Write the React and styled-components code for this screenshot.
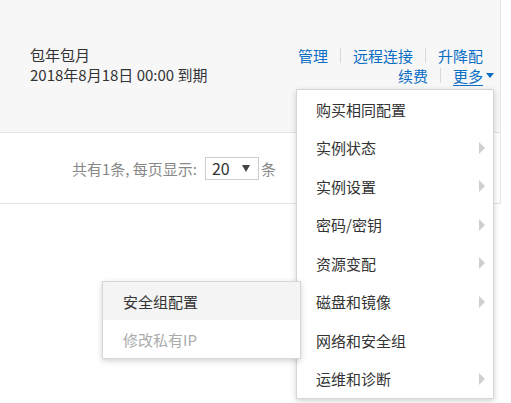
import React from 'react';
import styled, { createGlobalStyle } from 'styled-components';

const GlobalStyle = createGlobalStyle`
  body {
    margin: 0;
    background: #fff;
    font-family: "Noto Sans CJK SC", "Noto Sans", "Liberation Sans", sans-serif;
  }
`;

const menuItems = [
  { label: '购买相同配置' },
  { label: '实例状态', sub: true },
  { label: '实例设置', sub: true },
  { label: '密码/密钥', sub: true },
  { label: '资源变配', sub: true },
  { label: '磁盘和镜像', sub: true },
  { label: '网络和安全组' },
  { label: '运维和诊断', sub: true },
];

const subItems = [
  { label: '安全组配置', active: true },
  { label: '修改私有IP', disabled: true },
];

export default function App() {
  return (
    <>
      <GlobalStyle />
      <Page>
        <Panel>
          <InstanceRow>
            <Billing>
              <div>包年包月</div>
              <div>2018年8月18日 00:00 到期</div>
            </Billing>
            <Actions>
              <ActionLine $inset>
                <Link>管理</Link>
                <Sep />
                <Link>远程连接</Link>
                <Sep />
                <Link>升降配</Link>
              </ActionLine>
              <ActionLine>
                <Link>续费</Link>
                <Sep />
                <Link $underline>更多</Link>
                <Caret />
              </ActionLine>
            </Actions>
          </InstanceRow>
          <PagerRow>
            共有1条, 每页显示:
            <PageSize>
              20
              <SelectCaret />
            </PageSize>
            条
          </PagerRow>
        </Panel>

        <Menu>
          {menuItems.map(item => (
            <MenuItem key={item.label}>
              {item.label}
              {item.sub && <SubArrow />}
            </MenuItem>
          ))}
        </Menu>

        <SubMenu>
          {subItems.map(item => (
            <SubItem
              key={item.label}
              $active={item.active}
              $disabled={item.disabled}
            >
              {item.label}
            </SubItem>
          ))}
        </SubMenu>
      </Page>
    </>
  );
}

const Page = styled.div`
  position: relative;
  width: 511px;
  height: 403px;
  overflow: hidden;
  background: #fff;
`;

const Panel = styled.div`
  width: 500px;
  border-right: 1px solid #e6e6e6;
`;

const InstanceRow = styled.div`
  display: flex;
  justify-content: space-between;
  align-items: flex-start;
  height: 133px;
  box-sizing: border-box;
  padding: 45px 6px 0 30px;
  background: #f7f7f8;
  border-bottom: 1px solid #e2e2e2;
`;

const Billing = styled.div`
  font-size: 15px;
  line-height: 20px;
  color: #333;
`;

const Actions = styled.div`
  display: flex;
  flex-direction: column;
  align-items: flex-end;
`;

const ActionLine = styled.div`
  display: flex;
  align-items: center;
  height: 20px;
  padding-right: ${p => (p.$inset ? '11px' : '0')};
  font-size: 15px;
`;

const Link = styled.span`
  color: #0a6ec4;
  cursor: pointer;
  text-decoration: ${p => (p.$underline ? 'underline' : 'none')};
  text-underline-offset: 3px;
`;

const Sep = styled.span`
  width: 1px;
  height: 15px;
  margin: 0 12px;
  background: #d9d9d9;
`;

const Caret = styled.span`
  margin-left: 3px;
  border-left: 4px solid transparent;
  border-right: 4px solid transparent;
  border-top: 5px solid #0a6ec4;
`;

const PagerRow = styled.div`
  display: flex;
  justify-content: flex-end;
  align-items: center;
  height: 71px;
  box-sizing: border-box;
  padding-right: 224px;
  font-size: 15px;
  color: #888;
  border-bottom: 1px solid #e2e2e2;
`;

const PageSize = styled.div`
  display: flex;
  align-items: center;
  justify-content: space-between;
  width: 54px;
  height: 23px;
  box-sizing: border-box;
  margin: 0 2px 0 8px;
  padding: 0 8px 0 6px;
  border: 1px solid #ccc;
  color: #333;
  font-size: 16px;
`;

const SelectCaret = styled.span`
  border-left: 4px solid transparent;
  border-right: 4px solid transparent;
  border-top: 7px solid #444;
`;

const Menu = styled.div`
  position: absolute;
  left: 296px;
  top: 89px;
  width: 198px;
  box-sizing: border-box;
  background: #fff;
  border: 1px solid #d6d6d6;
  box-shadow: 0 2px 6px rgba(0, 0, 0, 0.18);
`;

const MenuItem = styled.div`
  display: flex;
  align-items: center;
  justify-content: space-between;
  height: 38.5px;
  padding: 0 8px 0 19px;
  font-size: 15px;
  color: #333;
  cursor: pointer;
`;

const SubArrow = styled.span`
  border-top: 6px solid transparent;
  border-bottom: 6px solid transparent;
  border-left: 6px solid #cfcfcf;
`;

const SubMenu = styled.div`
  position: absolute;
  left: 102px;
  top: 281px;
  width: 199px;
  box-sizing: border-box;
  background: #fff;
  border: 1px solid #d6d6d6;
  box-shadow: 0 2px 6px rgba(0, 0, 0, 0.18);
`;

const SubItem = styled.div`
  display: flex;
  align-items: center;
  height: 38px;
  padding-left: 20px;
  font-size: 15px;
  color: ${p => (p.$disabled ? '#aaa' : '#333')};
  background: ${p => (p.$active ? '#f4f4f4' : '#fff')};
  cursor: ${p => (p.$disabled ? 'not-allowed' : 'pointer')};
`;
